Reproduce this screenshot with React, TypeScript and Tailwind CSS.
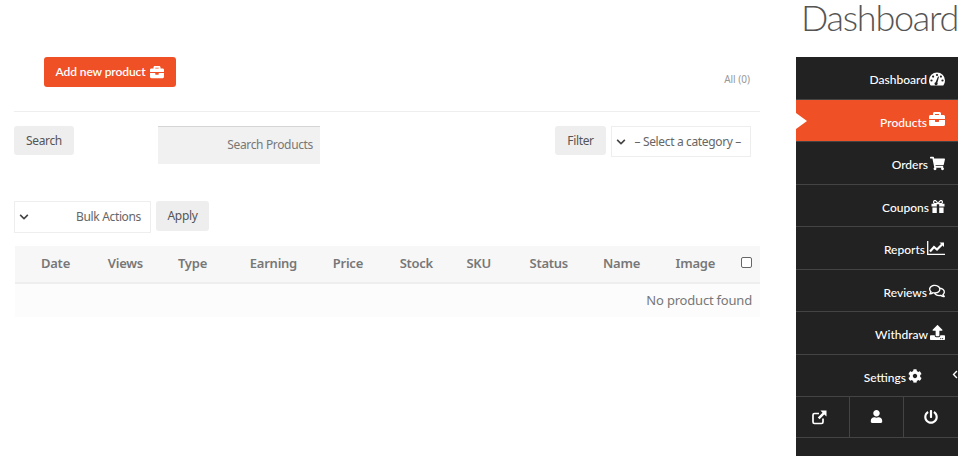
import React from 'react';
import { FaBriefcase, FaShoppingCart, FaRegComments, FaUpload, FaCog, FaUser, FaPowerOff, FaChevronDown, FaChevronLeft } from 'react-icons/fa';

const GaugeIcon = () => (
    <svg viewBox="0 0 16 14" className="w-4 h-[14px] -mt-[2px]">
        <path d="M8 .5A8 8 0 0 0 0 8.5c0 1.9.6 3.6 1.7 5h12.6A8 8 0 0 0 16 8.5a8 8 0 0 0-8-8z" fill="white" />
        <g fill="#222222">
            <circle cx="8" cy="3" r="1.1" />
            <circle cx="4.1" cy="4.6" r="1.1" />
            <circle cx="2.5" cy="8.5" r="1.1" />
            <circle cx="13.5" cy="8.5" r="1.1" />
            <circle cx="11.9" cy="4.6" r="1.1" />
            <path d="M6.6 10.2L9 4.4L10 4.8L8.4 10.8A1.6 1.6 0 1 1 6.6 10.2z" />
        </g>
    </svg>
);

const GiftIcon = () => (
    <svg viewBox="0 0 14 14" className="w-[14px] h-[13px] -mt-[3px]" fill="white">
        <path d="M7 4C5.5 1 4.6.5 3.6.5A1.8 1.8 0 0 0 3.6 4zM7 4C8.5 1 9.4.5 10.4.5A1.8 1.8 0 0 1 10.4 4z" fill="none" stroke="white" strokeWidth="1.3" />
        <path d="M0 4h5.7v3H0zM8.3 4H14v3H8.3zM1 8h4.7v6H1zM8.3 8H13v6H8.3z" />
    </svg>
);

const ChartIcon = () => (
    <svg viewBox="0 0 18 14" className="w-[18px] h-[14px] -mt-[4px]" fill="none" stroke="white">
        <path d="M.7 0V13.3H18" strokeWidth="1.3" />
        <path d="M3 10.5L7 6L10 8.5L15 3.5" strokeWidth="2.2" />
        <path d="M12.5 1.5H17V6z" fill="white" stroke="none" />
    </svg>
);

const ExternalIcon = () => (
    <svg viewBox="0 0 16 16" className="w-4 h-4" fill="none" stroke="white">
        <path d="M12 9.5V13a1.5 1.5 0 0 1-1.5 1.5h-7A1.5 1.5 0 0 1 2 13V6a1.5 1.5 0 0 1 1.5-1.5H8" strokeWidth="1.7" />
        <path d="M9.5 1.5H15.5V7.5L13.3 5.4L8.6 10.2L6.8 8.4L11.5 3.7Z" fill="white" stroke="none" />
    </svg>
);

const menu = [
    { label: 'Dashboard', icon: <GaugeIcon /> },
    { label: 'Products', icon: <FaBriefcase className="w-4 h-4 -mt-[8px]" />, active: true },
    { label: 'Orders', icon: <FaShoppingCart className="w-[15px] h-[15px] -mt-[3px]" /> },
    { label: 'Coupons', icon: <GiftIcon /> },
    { label: 'Reports', icon: <ChartIcon /> },
    { label: 'Reviews', icon: <FaRegComments className="w-4 h-4 -mt-[3px]" /> },
    { label: 'Withdraw', icon: <FaUpload className="w-[15px] h-[15px] -mt-[5px]" /> },
];

const columns = [
    { label: 'Date', w: 'w-[63px]' },
    { label: 'Views', w: 'w-[73px]' },
    { label: 'Type', w: 'w-[64px]' },
    { label: 'Earning', w: 'w-[90px]' },
    { label: 'Price', w: 'w-[66px]' },
    { label: 'Stock', w: 'w-[70px]' },
    { label: 'SKU', w: 'w-[58px]' },
    { label: 'Status', w: 'w-[77px]' },
    { label: 'Name', w: 'w-[72px]' },
    { label: 'Image', w: 'w-[75px]' },
];

const GrayButton: React.FC<{ label: string; className: string }> = ({ label, className }) => (
    <button className={`bg-[#eeeeee] rounded-[3px] text-[12px] tracking-[-0.35px] text-[#555555] text-center ${className}`}>{label}</button>
);

const SelectBox: React.FC<{ label: string; className: string }> = ({ label, className }) => (
    <div className={`flex items-center justify-between border border-[#eeeeee] bg-white text-[12px] tracking-[-0.35px] text-[#666666] ${className}`}>
        <FaChevronDown className="w-[10px] h-[10px] ml-1 text-[#444444]" />
        <span>{label}</span>
    </div>
);

export default function App() {
    return (
        <div className="flex h-[475px] w-[980px] overflow-hidden bg-white font-['Noto_Sans',sans-serif]">
            <main className="ml-[14px] w-[746px] pt-[57px]">
                <div className="flex items-start justify-between h-[55px] border-b border-[#eeeeee]">
                    <button className="ml-[30px] flex items-center gap-[5px] h-[30px] w-[132px] justify-center bg-[#f05025] rounded-[3px] text-white text-[12px] tracking-[-0.1px] font-semibold font-['Lato',sans-serif]">
                        Add new product <FaBriefcase className="w-[14px] h-[14px] -mt-px" />
                    </button>
                    <span className="mt-[15px] mr-[10px] text-[10px] text-[#999999]">All (0)</span>
                </div>

                <div className="flex items-start mt-[14px]">
                    <GrayButton label="Search" className="w-[60px] h-[29px]" />
                    <div className="ml-[84px] w-[162px] h-[38px] pb-[2px] bg-[#f1f1f1] border-t border-[#d5d5d5] flex items-center justify-end pr-[7px] text-[12px] tracking-[-0.35px] text-[#777777]">
                        Search Products
                    </div>
                    <GrayButton label="Filter" className="ml-[235px] w-[51px] h-[29px]" />
                    <SelectBox label="– Select a category –" className="ml-[5px] w-[140px] h-[31px] pr-[9px]" />
                </div>

                <div className="flex items-start mt-[37px]">
                    <SelectBox label="Bulk Actions" className="w-[137px] h-[32px] pr-[9px]" />
                    <GrayButton label="Apply" className="ml-[5px] w-[53px] h-[30px]" />
                </div>

                <table className="ml-px mt-[13px] w-[745px] table-fixed border-collapse">
                    <thead>
                        <tr className="bg-[#f7f7f7] h-[37px] border-b-2 border-[#eeeeee]">
                            {columns.map(c => (
                                <th key={c.label} className={`${c.w} pr-2 text-right text-[13px] tracking-[-0.25px] font-semibold text-[#777777]`}>{c.label}</th>
                            ))}
                            <th className="pr-2 text-right align-middle">
                                <span className="block ml-auto w-[11px] h-[11px] -mt-[3px] border border-[#666666] rounded-[2px] bg-white" />
                            </th>
                        </tr>
                    </thead>
                    <tbody>
                        <tr className="bg-[#fcfcfc] h-[34px]">
                            <td colSpan={11} className="pr-2 text-right text-[13px] tracking-[-0.2px] text-[#777777]">No product found</td>
                        </tr>
                    </tbody>
                </table>
            </main>

            <aside className="ml-[36px] w-[162px]">
                <h1 className="h-[57px] pl-[5px] text-[36px] leading-[36px] -mt-[1px] mb-[1px] font-light text-[#555555] tracking-[-1.25px] whitespace-nowrap font-['Lato',sans-serif]">
                    Dashboard
                </h1>
                <nav className="h-[399px] bg-[#222222] font-['Lato',sans-serif] text-[12px] font-medium text-white">
                    {menu.map(m => (
                        <div key={m.label} className={`relative flex items-center justify-end gap-[2px] pr-[13px] pt-[5px] h-[42.5px] border-b border-[#444444] ${m.active ? 'bg-[#f05025]' : ''}`}>
                            {m.active && <span className="absolute left-0 top-[13px] border-y-[8px] border-l-[11px] border-y-transparent border-l-white" />}
                            <span>{m.label}</span>
                            {m.icon}
                        </div>
                    ))}
                    <div className="relative flex items-center justify-end pr-[36px] gap-[2px] pt-[5px] h-[42px] border-b border-[#444444]">
                        <span>Settings</span>
                        <FaCog className="w-[14px] h-[14px] -mt-[4px]" />
                        <FaChevronLeft className="absolute right-0 top-[15px] w-[6px] h-[9px]" />
                    </div>
                    <div className="flex h-[41px] border-b border-[#444444]">
                        <div className="w-[54px] pr-[7px] flex items-center justify-center border-r border-[#444444]"><ExternalIcon /></div>
                        <div className="w-[54px] flex items-center justify-center border-r border-[#444444]"><FaUser className="w-[13px] h-[13px]" /></div>
                        <div className="flex-1 flex items-center justify-center"><FaPowerOff className="w-[14px] h-[14px]" /></div>
                    </div>
                </nav>
            </aside>
        </div>
    );
}
